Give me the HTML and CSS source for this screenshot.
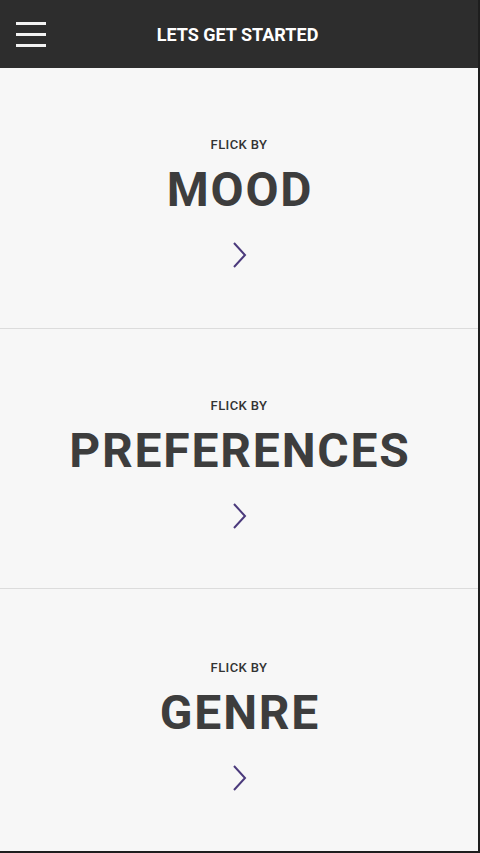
FILE: index.html
```html
<!DOCTYPE html>
<html lang="en">
<head>
  <meta charset="UTF-8" />
  <title>Lets Get Started</title>
  <link rel="stylesheet" href="styles.css">
</head>
<body>

  <div class="app">
    <header class="topbar">
      <button class="menu" aria-label="Menu">
        <span></span>
        <span></span>
        <span></span>
      </button>
      <h1>LETS GET STARTED</h1>
    </header>

    <a class="option" href="#mood">
      <span class="label">FLICK BY</span>
      <span class="title">MOOD</span>
      <svg class="chevron" width="16" height="26" viewBox="0 0 16 26">
        <polyline points="2,1 13,13 2,25" />
      </svg>
    </a>

    <a class="option" href="#preferences">
      <span class="label">FLICK BY</span>
      <span class="title">PREFERENCES</span>
      <svg class="chevron" width="16" height="26" viewBox="0 0 16 26">
        <polyline points="2,1 13,13 2,25" />
      </svg>
    </a>

    <a class="option" href="#genre">
      <span class="label">FLICK BY</span>
      <span class="title">GENRE</span>
      <svg class="chevron" width="16" height="26" viewBox="0 0 16 26">
        <polyline points="2,1 13,13 2,25" />
      </svg>
    </a>
  </div>

</body>
</html>
```

FILE: styles.css
```css
* {
  box-sizing: border-box;
}

body {
  font-family: Roboto, "Liberation Sans", sans-serif;
  margin: 0;
  padding: 0;
  background: #f7f7f7;
}

.app {
  display: flex;
  flex-direction: column;
  width: 480px;
  height: 853px;
  border-right: 2px solid #1e1e1e;
  border-bottom: 2px solid #1e1e1e;
  background: #f7f7f7;
}

.topbar {
  position: relative;
  height: 68px;
  flex: none;
  background: #2d2d2d;
  display: flex;
  align-items: center;
  justify-content: center;
}

.topbar h1 {
  margin: 0 0 0 -3px;
  color: white;
  font-size: 18px;
  font-weight: bold;
}

.menu {
  position: absolute;
  left: 16px;
  top: 22px;
  width: 30px;
  height: 25px;
  padding: 0;
  border: none;
  background: none;
  display: flex;
  flex-direction: column;
  justify-content: space-between;
  cursor: pointer;
}

.menu span {
  display: block;
  height: 3px;
  background: #f2f2f2;
}

.option {
  flex: none;
  height: 260px;
  display: flex;
  flex-direction: column;
  align-items: center;
  padding-top: 68px;
  text-decoration: none;
  border-bottom: 1px solid #dcdcdc;
}

.topbar + .option {
  height: 261px;
}

.option:last-child {
  flex: 1;
  padding-top: 70px;
  border-bottom: none;
}

.label {
  font-size: 13px;
  line-height: 18px;
  font-weight: 500;
  letter-spacing: 0.4px;
  color: #333;
}

.title {
  margin-top: 11px;
  padding-left: 2px;
  font-size: 48px;
  line-height: 50px;
  font-weight: bold;
  letter-spacing: 1.8px;
  color: #3d3d3d;
}

.chevron {
  margin-top: 27px;
  margin-left: 1px;
}

.chevron polyline {
  fill: none;
  stroke: #4b3a7c;
  stroke-width: 2;
}
```
